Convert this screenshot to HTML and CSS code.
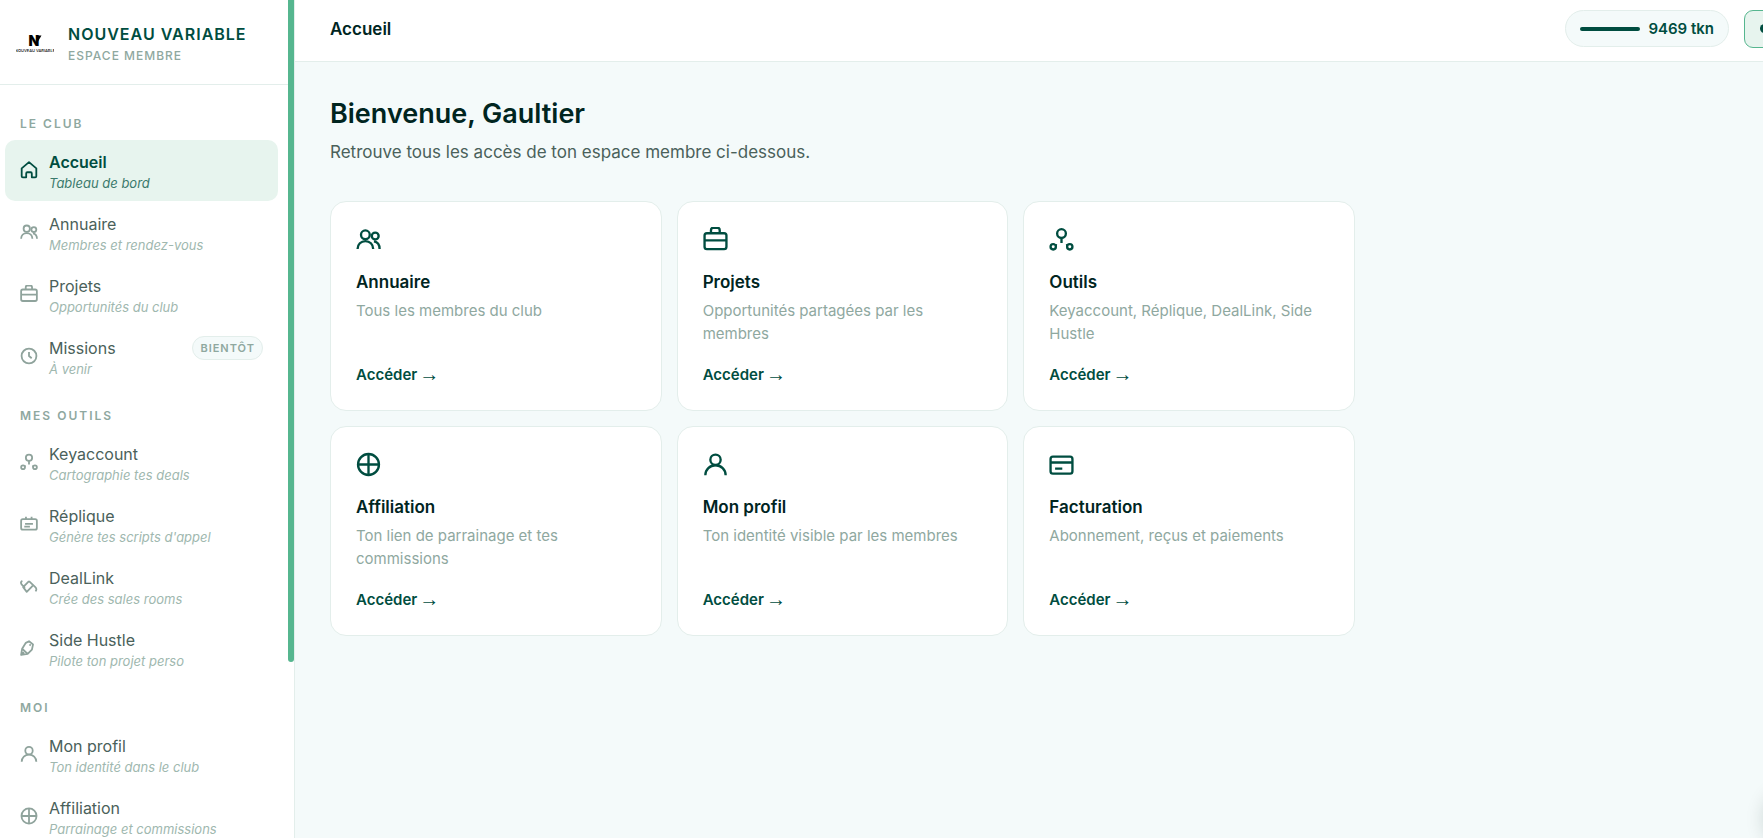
FILE: index.html
```html
<!DOCTYPE html>
<html lang="fr">
<head>
    <meta charset="UTF-8">
    <meta name="viewport" content="width=device-width, initial-scale=1.0">
    <title>Accueil - Nouveau Variable</title>
    <link rel="stylesheet" href="styles.css">
</head>
<body>
    <svg class="sprite" aria-hidden="true">
        <symbol id="i-home" viewBox="0 0 16 16">
            <path d="M1.5 6.5 8 1l6.5 5.5v7a1 1 0 0 1-1 1h-3V11a1 1 0 0 0-1-1h-3a1 1 0 0 0-1 1v3.5h-3a1 1 0 0 1-1-1z"/>
        </symbol>
        <symbol id="i-users" viewBox="0 0 16 16">
            <circle cx="6" cy="5" r="2.8"/>
            <circle cx="12.3" cy="5.8" r="2.2"/>
            <path d="M1 14c0-2.9 2.2-5 5-5s5 2.1 5 5M11.5 9.2c2.1.4 3.6 2.2 3.6 4.8"/>
        </symbol>
        <symbol id="i-case" viewBox="0 0 16 16">
            <rect x="1" y="4" width="14" height="10.2" rx="1.5"/>
            <path d="M5.1 4V2A1.5 1.5 0 0 1 6.6.5h2.6A1.5 1.5 0 0 1 10.7 2v2M1 8.6h14"/>
        </symbol>
        <symbol id="i-clock" viewBox="0 0 16 16">
            <circle cx="8" cy="8" r="6.6"/>
            <path d="M8 4.5V8l2.4 2"/>
        </symbol>
        <symbol id="i-nodes" viewBox="0 0 16 16">
            <circle cx="8" cy="4.2" r="2.8"/>
            <circle cx="2.7" cy="12.7" r="1.7"/>
            <circle cx="13.3" cy="12.7" r="1.7"/>
            <path d="M8 7v3.3M4 11.6l1.1.2M12 11.6l-1.1.2"/>
        </symbol>
        <symbol id="i-script" viewBox="0 0 16 16">
            <rect x="1" y="3.6" width="14" height="9.4" rx="1.5"/>
            <path d="M5.3 1.5v2M10.3 1.5v2M4.5 7.8h7M3.8 10.4h5"/>
        </symbol>
        <symbol id="i-link" viewBox="0 0 16 16">
            <path d="M8 3.6 2.8 9 6 13.2l5.2-5.3M2.1 3.4C.6 4 .5 5.6 1.6 6.7L4.4 9.6M8 3.6l5.6 5.4c1.2 1.2 1.3 2.6.1 3.7M11.2 7.9 9.3 9.8"/>
        </symbol>
        <symbol id="i-pen" viewBox="0 0 16 16">
            <path d="M1 14.2 1.9 8.6 5.2 3.4 8 2l3.6 2.8-1 4.7-3.8 3.8zM1.9 8.6l4.9 4.7M1 14.2l2.6-2.4M8.4 4.8l1.2 1"/>
        </symbol>
        <symbol id="i-user" viewBox="0 0 16 16">
            <circle cx="8" cy="5" r="3.3"/>
            <path d="M1.5 14.9c0-3.7 2.9-6.4 6.5-6.4s6.5 2.7 6.5 6.4"/>
        </symbol>
        <symbol id="i-globe" viewBox="0 0 16 16">
            <circle cx="8" cy="8" r="6.7"/>
            <path d="M8 1.3v13.4M1.3 8h13.4"/>
        </symbol>
        <symbol id="i-card" viewBox="0 0 16 16">
            <rect x="1" y="3" width="14" height="10.8" rx="1.5"/>
            <path d="M1 6.7h14M3.9 10.6h4.6"/>
        </symbol>
    </svg>

    <div class="app">
        <aside class="sidebar">
            <div class="sidebar-content">
                <div class="brand">
                    <svg class="logo" viewBox="0 0 38 38" role="img" aria-label="Nouveau Variable">
                        <text class="logo-mark" x="18" y="21" text-anchor="middle">N</text>
                        <path d="M22 10.5h3.5l-3.5 6z"/>
                        <text class="logo-text" x="19" y="27" text-anchor="middle">NOUVEAU VARIABLE</text>
                    </svg>
                    <div>
                        <p class="brand-name">NOUVEAU VARIABLE</p>
                        <p class="brand-sub">ESPACE MEMBRE</p>
                    </div>
                </div>

                <nav>
                    <h2 class="nav-title">LE CLUB</h2>
                    <a class="nav-item active" href="#">
                        <svg class="icon"><use href="#i-home"/></svg>
                        <span class="nav-text"><span class="nav-name">Accueil</span><em>Tableau de bord</em></span>
                    </a>
                    <a class="nav-item" href="#">
                        <svg class="icon"><use href="#i-users"/></svg>
                        <span class="nav-text"><span class="nav-name">Annuaire</span><em>Membres et rendez-vous</em></span>
                    </a>
                    <a class="nav-item" href="#">
                        <svg class="icon"><use href="#i-case"/></svg>
                        <span class="nav-text"><span class="nav-name">Projets</span><em>Opportunités du club</em></span>
                    </a>
                    <a class="nav-item" href="#">
                        <svg class="icon"><use href="#i-clock"/></svg>
                        <span class="nav-text"><span class="nav-name">Missions</span><em>À venir</em></span>
                        <span class="soon">BIENTÔT</span>
                    </a>

                    <h2 class="nav-title">MES OUTILS</h2>
                    <a class="nav-item" href="#">
                        <svg class="icon"><use href="#i-nodes"/></svg>
                        <span class="nav-text"><span class="nav-name">Keyaccount</span><em>Cartographie tes deals</em></span>
                    </a>
                    <a class="nav-item" href="#">
                        <svg class="icon"><use href="#i-script"/></svg>
                        <span class="nav-text"><span class="nav-name">Réplique</span><em>Génère tes scripts d'appel</em></span>
                    </a>
                    <a class="nav-item" href="#">
                        <svg class="icon"><use href="#i-link"/></svg>
                        <span class="nav-text"><span class="nav-name">DealLink</span><em>Crée des sales rooms</em></span>
                    </a>
                    <a class="nav-item" href="#">
                        <svg class="icon"><use href="#i-pen"/></svg>
                        <span class="nav-text"><span class="nav-name">Side Hustle</span><em>Pilote ton projet perso</em></span>
                    </a>

                    <h2 class="nav-title">MOI</h2>
                    <a class="nav-item" href="#">
                        <svg class="icon"><use href="#i-user"/></svg>
                        <span class="nav-text"><span class="nav-name">Mon profil</span><em>Ton identité dans le club</em></span>
                    </a>
                    <a class="nav-item" href="#">
                        <svg class="icon"><use href="#i-globe"/></svg>
                        <span class="nav-text"><span class="nav-name">Affiliation</span><em>Parrainage et commissions</em></span>
                    </a>
                </nav>
            </div>
            <div class="scrollbar"><div class="scrollbar-thumb"></div></div>
        </aside>

        <div class="main">
            <header class="topbar">
                <h1 class="topbar-title">Accueil</h1>
                <div class="topbar-actions">
                    <div class="tokens"><span class="tokens-bar"></span>9469 tkn</div>
                    <button class="status" type="button" aria-label="Statut"><span class="status-dot"></span></button>
                </div>
            </header>

            <main class="content">
                <h2 class="welcome">Bienvenue, Gaultier</h2>
                <p class="intro">Retrouve tous les accès de ton espace membre ci-dessous.</p>

                <div class="cards">
                    <a class="card" href="#">
                        <svg class="icon"><use href="#i-users"/></svg>
                        <h3>Annuaire</h3>
                        <p>Tous les membres du club</p>
                        <span class="card-link">Accéder <span class="arrow">→</span></span>
                    </a>
                    <a class="card" href="#">
                        <svg class="icon"><use href="#i-case"/></svg>
                        <h3>Projets</h3>
                        <p>Opportunités partagées par les membres</p>
                        <span class="card-link">Accéder <span class="arrow">→</span></span>
                    </a>
                    <a class="card" href="#">
                        <svg class="icon"><use href="#i-nodes"/></svg>
                        <h3>Outils</h3>
                        <p>Keyaccount, Réplique, DealLink, Side Hustle</p>
                        <span class="card-link">Accéder <span class="arrow">→</span></span>
                    </a>
                    <a class="card" href="#">
                        <svg class="icon"><use href="#i-globe"/></svg>
                        <h3>Affiliation</h3>
                        <p>Ton lien de parrainage et tes commissions</p>
                        <span class="card-link">Accéder <span class="arrow">→</span></span>
                    </a>
                    <a class="card" href="#">
                        <svg class="icon"><use href="#i-user"/></svg>
                        <h3>Mon profil</h3>
                        <p>Ton identité visible par les membres</p>
                        <span class="card-link">Accéder <span class="arrow">→</span></span>
                    </a>
                    <a class="card" href="#">
                        <svg class="icon"><use href="#i-card"/></svg>
                        <h3>Facturation</h3>
                        <p>Abonnement, reçus et paiements</p>
                        <span class="card-link">Accéder <span class="arrow">→</span></span>
                    </a>
                </div>
            </main>
            <button class="chat" type="button" aria-label="Aide"></button>
        </div>
    </div>
</body>
</html>
```
FILE: styles.css
```css
:root {
    --green: #004d40;
    --mint: #56b68f;
    --dark: #00251f;
    --text: #4a615a;
    --muted: #8fa89f;
    --line: #e3eeeb;
    --bg: #f4fafa;
    --soft: #e7f4ee;
}

* {
    box-sizing: border-box;
    margin: 0;
    padding: 0;
}

body {
    height: 100vh;
    overflow: hidden;
    font-family: Inter, 'Liberation Sans', sans-serif;
    color: var(--dark);
    background-color: var(--bg);
}

a {
    color: inherit;
    text-decoration: none;
}

.sprite {
    display: none;
}

.icon {
    flex-shrink: 0;
    width: 18px;
    height: 18px;
    fill: none;
    stroke: currentColor;
    stroke-width: 1.6;
    stroke-linejoin: round;
}

.app {
    display: flex;
    height: 100vh;
}

/* sidebar */

.sidebar {
    display: flex;
    flex-shrink: 0;
    width: 295px;
    background-color: white;
    border-right: 1px solid var(--line);
}

.sidebar-content {
    flex: 1;
    overflow: hidden;
}

.scrollbar {
    width: 6px;
}

.scrollbar-thumb {
    height: 79%;
    background-color: var(--mint);
    border-radius: 0 0 3px 3px;
}

.brand {
    display: flex;
    align-items: center;
    gap: 14px;
    height: 85px;
    padding: 4px 16px 0;
    border-bottom: 1px solid var(--line);
}

.logo {
    width: 38px;
    height: 38px;
}

.logo-mark {
    font-size: 14px;
    font-weight: 900;
}

.logo-text {
    font-size: 4px;
    font-weight: 500;
}

.brand-name {
    font-size: 16px;
    font-weight: 600;
    line-height: 24px;
    letter-spacing: 1px;
    color: var(--green);
}

.brand-sub {
    font-size: 12px;
    font-weight: 500;
    line-height: 20px;
    letter-spacing: 1px;
    color: var(--muted);
}

nav {
    padding: 11px 10px 0 5px;
}

.nav-title {
    padding: 20px 15px 8px;
    font-size: 12px;
    font-weight: 600;
    line-height: 16px;
    letter-spacing: 2px;
    color: var(--muted);
}

.nav-item {
    display: flex;
    align-items: center;
    gap: 11px;
    height: 61px;
    margin-bottom: 1px;
    padding: 0 15px 2px;
    border-radius: 10px;
    color: #8fa39c;
}

.nav-text {
    flex: 1;
    padding-top: 4px;
}

.nav-name {
    display: block;
    font-size: 16px;
    line-height: 22px;
    color: var(--text);
}

.nav-item em {
    display: block;
    font-size: 13px;
    line-height: 20px;
    color: #a0b8af;
}

.active {
    background-color: var(--soft);
    color: var(--green);
}

.active .nav-name {
    font-weight: 600;
    color: var(--green);
}

.active em {
    color: #3b7a6c;
}

.soon {
    align-self: flex-start;
    margin-top: 10px;
    padding: 0 7px;
    font-size: 11px;
    font-weight: 600;
    line-height: 22px;
    letter-spacing: 1px;
    color: var(--muted);
    background-color: var(--bg);
    border: 1px solid var(--line);
    border-radius: 12px;
}

/* main */

.main {
    position: relative;
    flex: 1;
    min-width: 0;
}

.topbar {
    display: flex;
    align-items: center;
    justify-content: space-between;
    height: 62px;
    padding: 0 0 4px 35px;
    background-color: white;
    border-bottom: 1px solid var(--line);
}

.topbar-title {
    font-size: 17px;
    font-weight: 600;
}

/* the status button runs past the right edge */
.topbar-actions {
    display: flex;
    align-items: center;
    gap: 15px;
    margin-right: -101px;
}

.tokens {
    display: flex;
    align-items: center;
    gap: 8px;
    height: 37px;
    padding: 0 14px;
    font-size: 15px;
    font-weight: 600;
    color: var(--green);
    background-color: var(--bg);
    border: 1px solid var(--line);
    border-radius: 19px;
}

.tokens-bar {
    width: 60px;
    height: 4px;
    border-radius: 2px;
    background-color: var(--green);
}

.status {
    display: flex;
    align-items: center;
    width: 120px;
    height: 38px;
    padding-left: 15px;
    background-color: var(--soft);
    border: 1px solid var(--mint);
    border-radius: 9px;
}

.status-dot {
    width: 9px;
    height: 9px;
    border-radius: 50%;
    background-color: var(--green);
}

.content {
    max-width: 1095px;
    padding: 35px;
}

.welcome {
    font-size: 27px;
    font-weight: 600;
    line-height: 34px;
}

.intro {
    margin: 8px 0 36px;
    font-size: 17px;
    line-height: 26px;
    color: var(--text);
}

.cards {
    display: grid;
    grid-template-columns: repeat(3, 1fr);
    gap: 15px;
}

.card {
    display: flex;
    flex-direction: column;
    padding: 25px;
    background-color: white;
    border: 1px solid var(--line);
    border-radius: 16px;
}

.card .icon {
    width: 25px;
    height: 25px;
    margin-bottom: 18px;
    stroke-width: 1.5;
    color: var(--green);
}

.card h3 {
    margin-bottom: 5px;
    font-size: 17px;
    font-weight: 600;
    line-height: 24px;
}

.card p {
    flex: 1;
    min-height: 46px;
    margin-bottom: 18px;
    font-size: 15px;
    line-height: 23px;
    color: var(--muted);
}

.card-link {
    display: flex;
    align-items: center;
    gap: 2px;
    height: 22px;
    font-size: 15px;
    font-weight: 600;
    color: var(--green);
}

.arrow {
    font-family: 'Liberation Sans', Arial, sans-serif;
    font-size: 20px;
    line-height: 22px;
}

.chat {
    position: absolute;
    right: -60px;
    bottom: -6px;
    width: 58px;
    height: 58px;
    border: none;
    border-radius: 50%;
    background-color: var(--green);
    box-shadow: 0 4px 20px rgba(0, 37, 31, 0.2);
}
```
